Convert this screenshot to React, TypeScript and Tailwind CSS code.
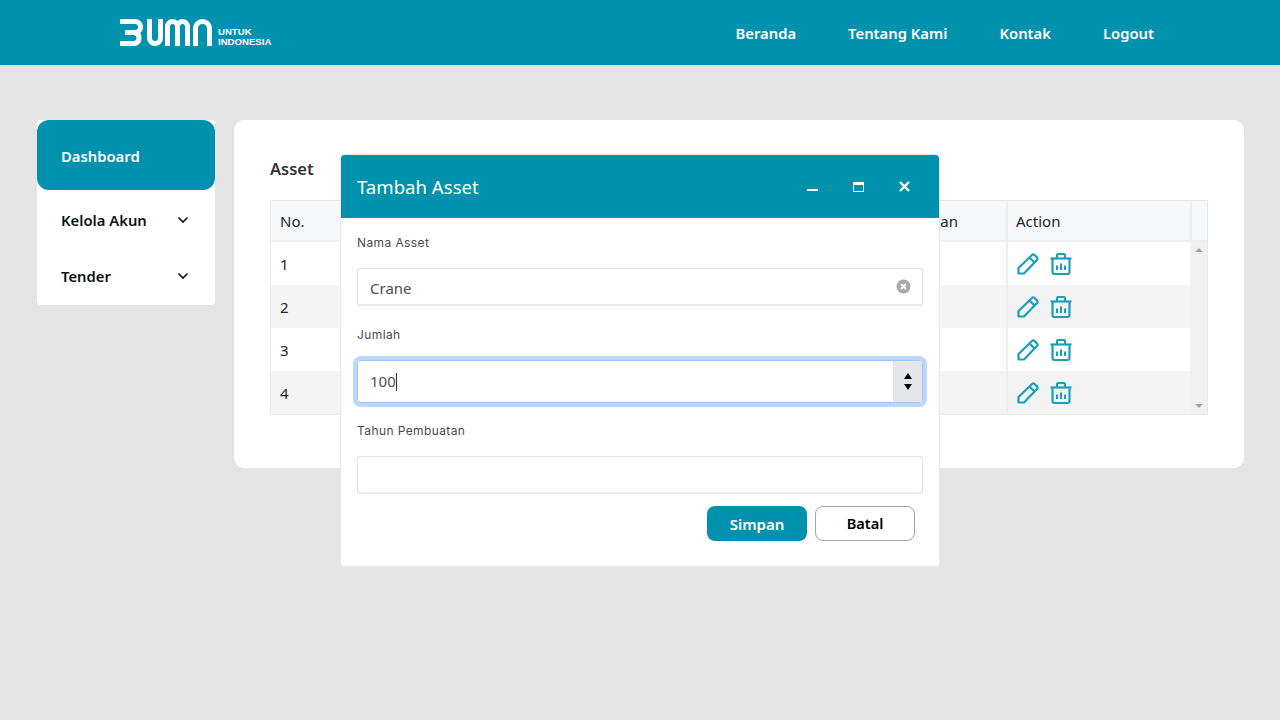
function Logo() {
  return (
    <div className="flex items-center gap-[5px]">
      <svg width="93" height="27" viewBox="0 0 93 27" fill="none" stroke="#ffffff" strokeWidth="5">
        <path d="M0 2.5H15a5.5 5.5 0 0 1 0 11H5M15 13.5a5.75 5.75 0 0 1 0 11H0" />
        <path d="M29.5 0V19a5.5 5.5 0 0 0 11 0V0" />
        <path d="M47.5 27V7.5a5 5 0 0 1 10 0V27M57.5 7.5a5 5 0 0 1 10 0V27" />
        <path d="M75.5 27V9.5a7 7 0 0 1 14 0V27" />
      </svg>
      <div className="flex flex-col text-[9.6px] leading-[10px] font-bold text-white font-['Liberation_Sans',sans-serif] mt-[9px]">
        <span>UNTUK</span>
        <span>INDONESIA</span>
      </div>
    </div>
  );
}

function Chevron() {
  return (
    <svg width="12" height="12" viewBox="0 0 12 12" fill="none" stroke="#111111" strokeWidth="1.6">
      <path d="M1.5 3.5 6 8l4.5-4.5" />
    </svg>
  );
}

function PencilIcon() {
  return (
    <svg width="22" height="22" viewBox="0 0 22 22" fill="none" stroke="#1a9fb8" strokeWidth="2.2" strokeLinejoin="round">
      <path d="M1.5 20.5V15L15 2a2 2 0 0 1 2.6 0l2.4 2.4a2 2 0 0 1 0 2.6L7 20.5Z" />
      <path d="M12.5 4.5 17.5 9.5" />
    </svg>
  );
}

function TrashIcon() {
  return (
    <svg width="22" height="22" viewBox="0 0 22 22" fill="none" stroke="#1a9fb8" strokeWidth="2.2">
      <path d="M0.5 5.5H21.5" />
      <path d="M7 5V2.5a1.5 1.5 0 0 1 1.5-1.5h5A1.5 1.5 0 0 1 15 2.5V5" />
      <path d="M2.5 5.5V19a2 2 0 0 0 2 2h13a2 2 0 0 0 2-2V5.5" />
      <path d="M7 12.5V17M11 10.5V17M15 12.5V17" strokeWidth="2" />
    </svg>
  );
}

function Row({ n, alt }: { n: number; alt: boolean }) {
  return (
    <div className={`flex h-[43px] ${alt ? "bg-[#f4f4f4]" : "bg-white"}`}>
      <div className="flex-1 pl-[9px] pt-[1px] flex items-center text-[15px] text-[#212529]">{n}</div>
      <div className="w-[184px] border-l-2 border-[#eceef1] pl-[9px] pt-[1px] flex items-center gap-[11px]">
        <PencilIcon />
        <TrashIcon />
      </div>
    </div>
  );
}

function Table() {
  return (
    <div className="border border-[#e7e9ec] flex flex-col">
      <div className="flex h-[41px] bg-[#f7f8fa] border-b-2 border-[#eceef1] text-[15px] text-[#212529]">
        <div className="flex-1 pl-[9px] pt-[1px] flex items-center">No.</div>
        <div className="w-[300px] pt-[1px] pr-[48px] flex items-center justify-end">Tahun Pembuatan</div>
        <div className="w-[184px] border-l-2 border-[#eceef1] pl-[8px] pt-[1px] flex items-center">Action</div>
        <div className="w-[17px] border-l-2 border-[#eceef1]" />
      </div>
      <div className="flex">
        <div className="flex-1 flex flex-col">
          {[1, 2, 3, 4].map((n) => (
            <Row key={n} n={n} alt={n % 2 === 0} />
          ))}
        </div>
        <div className="w-[17px] bg-[#f1f1f1] flex flex-col items-center justify-between py-[6px]">
          <div className="w-0 h-0 border-x-[4px] border-x-transparent border-b-[4px] border-b-[#a8a8a8]" />
          <div className="w-0 h-0 border-x-[4px] border-x-transparent border-t-[4px] border-t-[#a8a8a8]" />
        </div>
      </div>
    </div>
  );
}

function Label({ children }: { children: string }) {
  return (
    <div className="h-[18px] flex items-center text-[12px] tracking-[0.4px] text-[#4a4a4a] font-['Inter',sans-serif]">
      {children}
    </div>
  );
}

function Modal() {
  return (
    <div className="absolute left-[341px] top-[155px] w-[598px] h-[411px] bg-white rounded-[3px] outline outline-[#e6e8eb] flex flex-col">
      <div className="h-[63px] shrink-0 rounded-t-[3px] bg-[#0092ad] flex items-center pl-[16px] pr-[29px] text-white">
        <span className="flex-1 text-[18.6px]">Tambah Asset</span>
        <div className="flex items-center gap-[35px]">
          <span className="w-[11px] h-[2px] bg-white mt-[6px]" />
          <span className="w-[11px] h-[10px] border border-white border-t-[3px]" />
          <svg width="11" height="11" viewBox="0 0 11 11" stroke="#ffffff" strokeWidth="2.4">
            <path d="M1 1 10 10M10 1 1 10" />
          </svg>
        </div>
      </div>
      <div className="flex-1 flex flex-col px-[16px] pt-[16px]">
        <Label>Nama Asset</Label>
        <div className="mt-[16px] h-[38px] rounded-[3px] border border-[#dfe3e8] border-b-2 border-b-[#e8ebef] flex items-center pl-[12px] pr-[11px] text-[15px] text-[#495057]">
          <span className="flex-1 pt-[3px]">Crane</span>
          <svg width="15" height="15" viewBox="0 0 15 15">
            <circle cx="7.5" cy="7.5" r="7" fill="#a9a9a9" />
            <path d="M5 5 10 10M10 5 5 10" stroke="#ffffff" strokeWidth="2" />
          </svg>
        </div>
        <div className="mt-[20px]">
          <Label>Jumlah</Label>
        </div>
        <div className="mt-[16px] h-[43px] rounded-[4px] border border-[#9cc3fb] ring-[4px] ring-[#bcd7fd] flex items-center pl-[12px] text-[15px] text-[#495057] overflow-hidden">
          <span>100</span>
          <span className="w-[1px] h-[18px] bg-[#333333]" />
          <div className="ml-auto w-[29px] h-full bg-[#e4e6ea] flex flex-col items-center justify-center gap-[5px]">
            <div className="w-0 h-0 border-x-[4px] border-x-transparent border-b-[6px] border-b-black" />
            <div className="w-0 h-0 border-x-[4px] border-x-transparent border-t-[6px] border-t-black" />
          </div>
        </div>
        <div className="mt-[19px]">
          <Label>Tahun Pembuatan</Label>
        </div>
        <div className="mt-[16px] h-[38px] rounded-[3px] border border-[#dfe3e8] border-b-2 border-b-[#e8ebef]" />
        <div className="mt-[12px] flex justify-end gap-[8px] pr-[8px]">
          <div className="w-[100px] h-[35px] pt-[1px] rounded-[8px] bg-[#0092ad] text-white font-semibold text-[15px] flex items-center justify-center">
            Simpan
          </div>
          <div className="w-[100px] h-[35px] pt-[1px] rounded-[8px] border border-[#a3a3a3] bg-white text-black font-semibold text-[14.6px] flex items-center justify-center">
            Batal
          </div>
        </div>
      </div>
    </div>
  );
}

export default function App() {
  return (
    <div className="relative w-[1280px] h-[720px] overflow-hidden bg-[#e4e4e4] font-['Noto_Sans',sans-serif]">
      <header className="h-[65px] bg-[#0092ad] flex items-center pl-[120px] pr-[126px]">
        <Logo />
        <nav className="ml-auto pt-[1px] flex items-center gap-[52px] text-white text-[14.8px] font-semibold">
          <span>Beranda</span>
          <span>Tentang Kami</span>
          <span>Kontak</span>
          <span>Logout</span>
        </nav>
      </header>
      <div className="flex items-start pl-[37px] pt-[55px] gap-[19px]">
        <aside className="w-[178px] h-[185px] bg-white rounded-[4px] flex flex-col text-[14.8px] font-semibold text-[#111111]">
          <div className="h-[70px] pt-[2px] bg-[#0092ad] rounded-[12px] text-white flex items-center pl-[24px]">Dashboard</div>
          <div className="h-[60px] flex items-center justify-between pl-[24px] pr-[26px]">
            <span>Kelola Akun</span>
            <Chevron />
          </div>
          <div className="h-[52px] flex items-center justify-between pl-[24px] pr-[26px]">
            <span>Tender</span>
            <Chevron />
          </div>
        </aside>
        <main className="w-[1010px] h-[348px] bg-white rounded-[10px] px-[36px] pt-[36px]">
          <div className="h-[26px] flex items-center text-[16.5px] font-semibold text-[#333333]">Asset</div>
          <div className="mt-[18px]">
            <Table />
          </div>
        </main>
      </div>
      <Modal />
    </div>
  );
}
